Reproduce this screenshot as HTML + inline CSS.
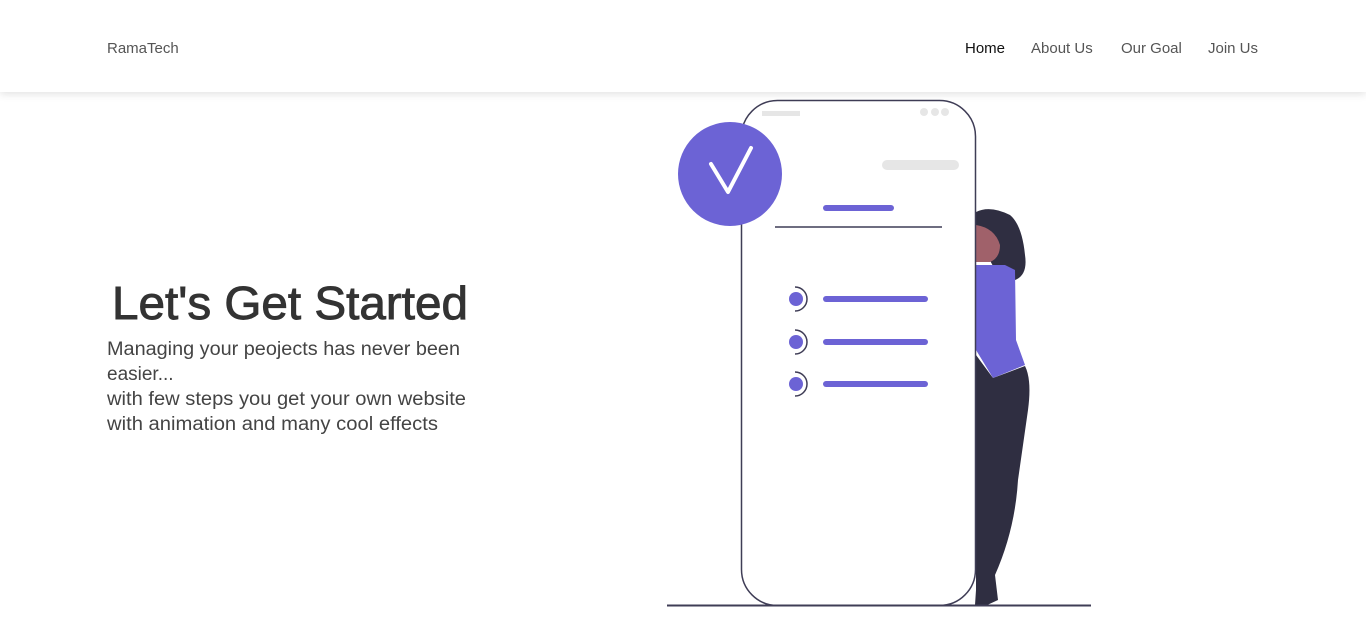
<!DOCTYPE html>
<html><head><meta charset="utf-8"><style>
body{margin:0;width:1366px;height:643px;overflow:hidden;background:#fff;font-family:"Liberation Sans",sans-serif;position:relative}
.nav{position:absolute;left:0;top:0;width:1366px;height:92px;background:#fff;box-shadow:0 2px 8px rgba(0,0,0,.12);z-index:2}
.nav span{position:absolute;top:40px;font-size:15px;color:#555;}
svg{position:absolute;left:0;top:0}
</style></head><body>
<div class="nav">
<span style="left:107px">RamaTech</span>
<span style="left:965px;color:#111">Home</span>
<span style="left:1031px">About Us</span>
<span style="left:1121px">Our Goal</span>
<span style="left:1208px">Join Us</span>
</div>
<svg width="1366" height="643" viewBox="0 0 1366 643">
<text x="112" y="319" font-size="46" fill="#333" stroke="#333" stroke-width="0.9" textLength="356" lengthAdjust="spacingAndGlyphs" font-family="Liberation Sans">Let's Get Started</text>
<g font-size="19" fill="#444" font-family="Liberation Sans">
<text x="107" y="355" textLength="353" lengthAdjust="spacingAndGlyphs">Managing your peojects has never been</text>
<text x="107" y="380">easier...</text>
<text x="107" y="405" textLength="359" lengthAdjust="spacingAndGlyphs">with few steps you get your own website</text>
<text x="107" y="430" textLength="331" lengthAdjust="spacingAndGlyphs">with animation and many cool effects</text>
</g>
<!-- woman -->
<path d="M976 212 Q990 205 1010 215 Q1022 225 1025 255 Q1028 275 1015 280 Q1000 282 995 270 Q985 250 976 240 Z" fill="#2f2e41"/>
<path d="M976 225 Q995 228 1000 245 Q1000 258 990 262 L976 262 Z" fill="#a0616a"/>
<path d="M974 268 Q985 262 990 270 L990 290 L978 300 Z" fill="#a0616a"/>
<path d="M976 265 L1005 265 L1015 270 L1016 340 L1025 365 L993 378 L976 350 Z" fill="#6c63d5"/>
<path d="M976 355 L993 378 L1025 366 Q1032 380 1028 410 L1018 480 Q1015 530 995 575 L998 600 L985 606 L975 605 L976 590 Z" fill="#2f2e41"/>
<!-- phone -->
<rect x="741.5" y="100.5" width="234" height="505" rx="36" fill="#fff" stroke="#3f3d56" stroke-width="1.5"/>
<rect x="762" y="111" width="38" height="5" fill="#e6e6e6"/>
<circle cx="924" cy="112" r="4" fill="#e6e6e6"/><circle cx="935" cy="112" r="4" fill="#e6e6e6"/><circle cx="945" cy="112" r="4" fill="#e6e6e6"/>
<rect x="882" y="160" width="77" height="10" rx="5" fill="#e6e6e6"/>
<rect x="823" y="205" width="71" height="6" rx="3" fill="#6c63d5"/>
<line x1="775" y1="227" x2="942" y2="227" stroke="#3f3d56" stroke-width="1.5"/>
<g fill="#6c63d5">
<circle cx="796" cy="299" r="7"/><rect x="823" y="296" width="105" height="6" rx="3"/>
<circle cx="796" cy="342" r="7"/><rect x="823" y="339" width="105" height="6" rx="3"/>
<circle cx="796" cy="384" r="7"/><rect x="823" y="381" width="105" height="6" rx="3"/>
</g>
<g fill="none" stroke="#3f3d56" stroke-width="1.5">
<path d="M795 287 A12 12 0 0 1 795 311"/><path d="M795 330 A12 12 0 0 1 795 354"/><path d="M795 372 A12 12 0 0 1 795 396"/>
</g>
<circle cx="730" cy="174" r="52" fill="#6c63d5"/>
<path d="M711 164 L728 192 L751 148" fill="none" stroke="#fff" stroke-width="4" stroke-linecap="round" stroke-linejoin="round"/>
<line x1="667" y1="605.5" x2="1091" y2="605.5" stroke="#3f3d56" stroke-width="2"/>
</svg>
</body></html>
